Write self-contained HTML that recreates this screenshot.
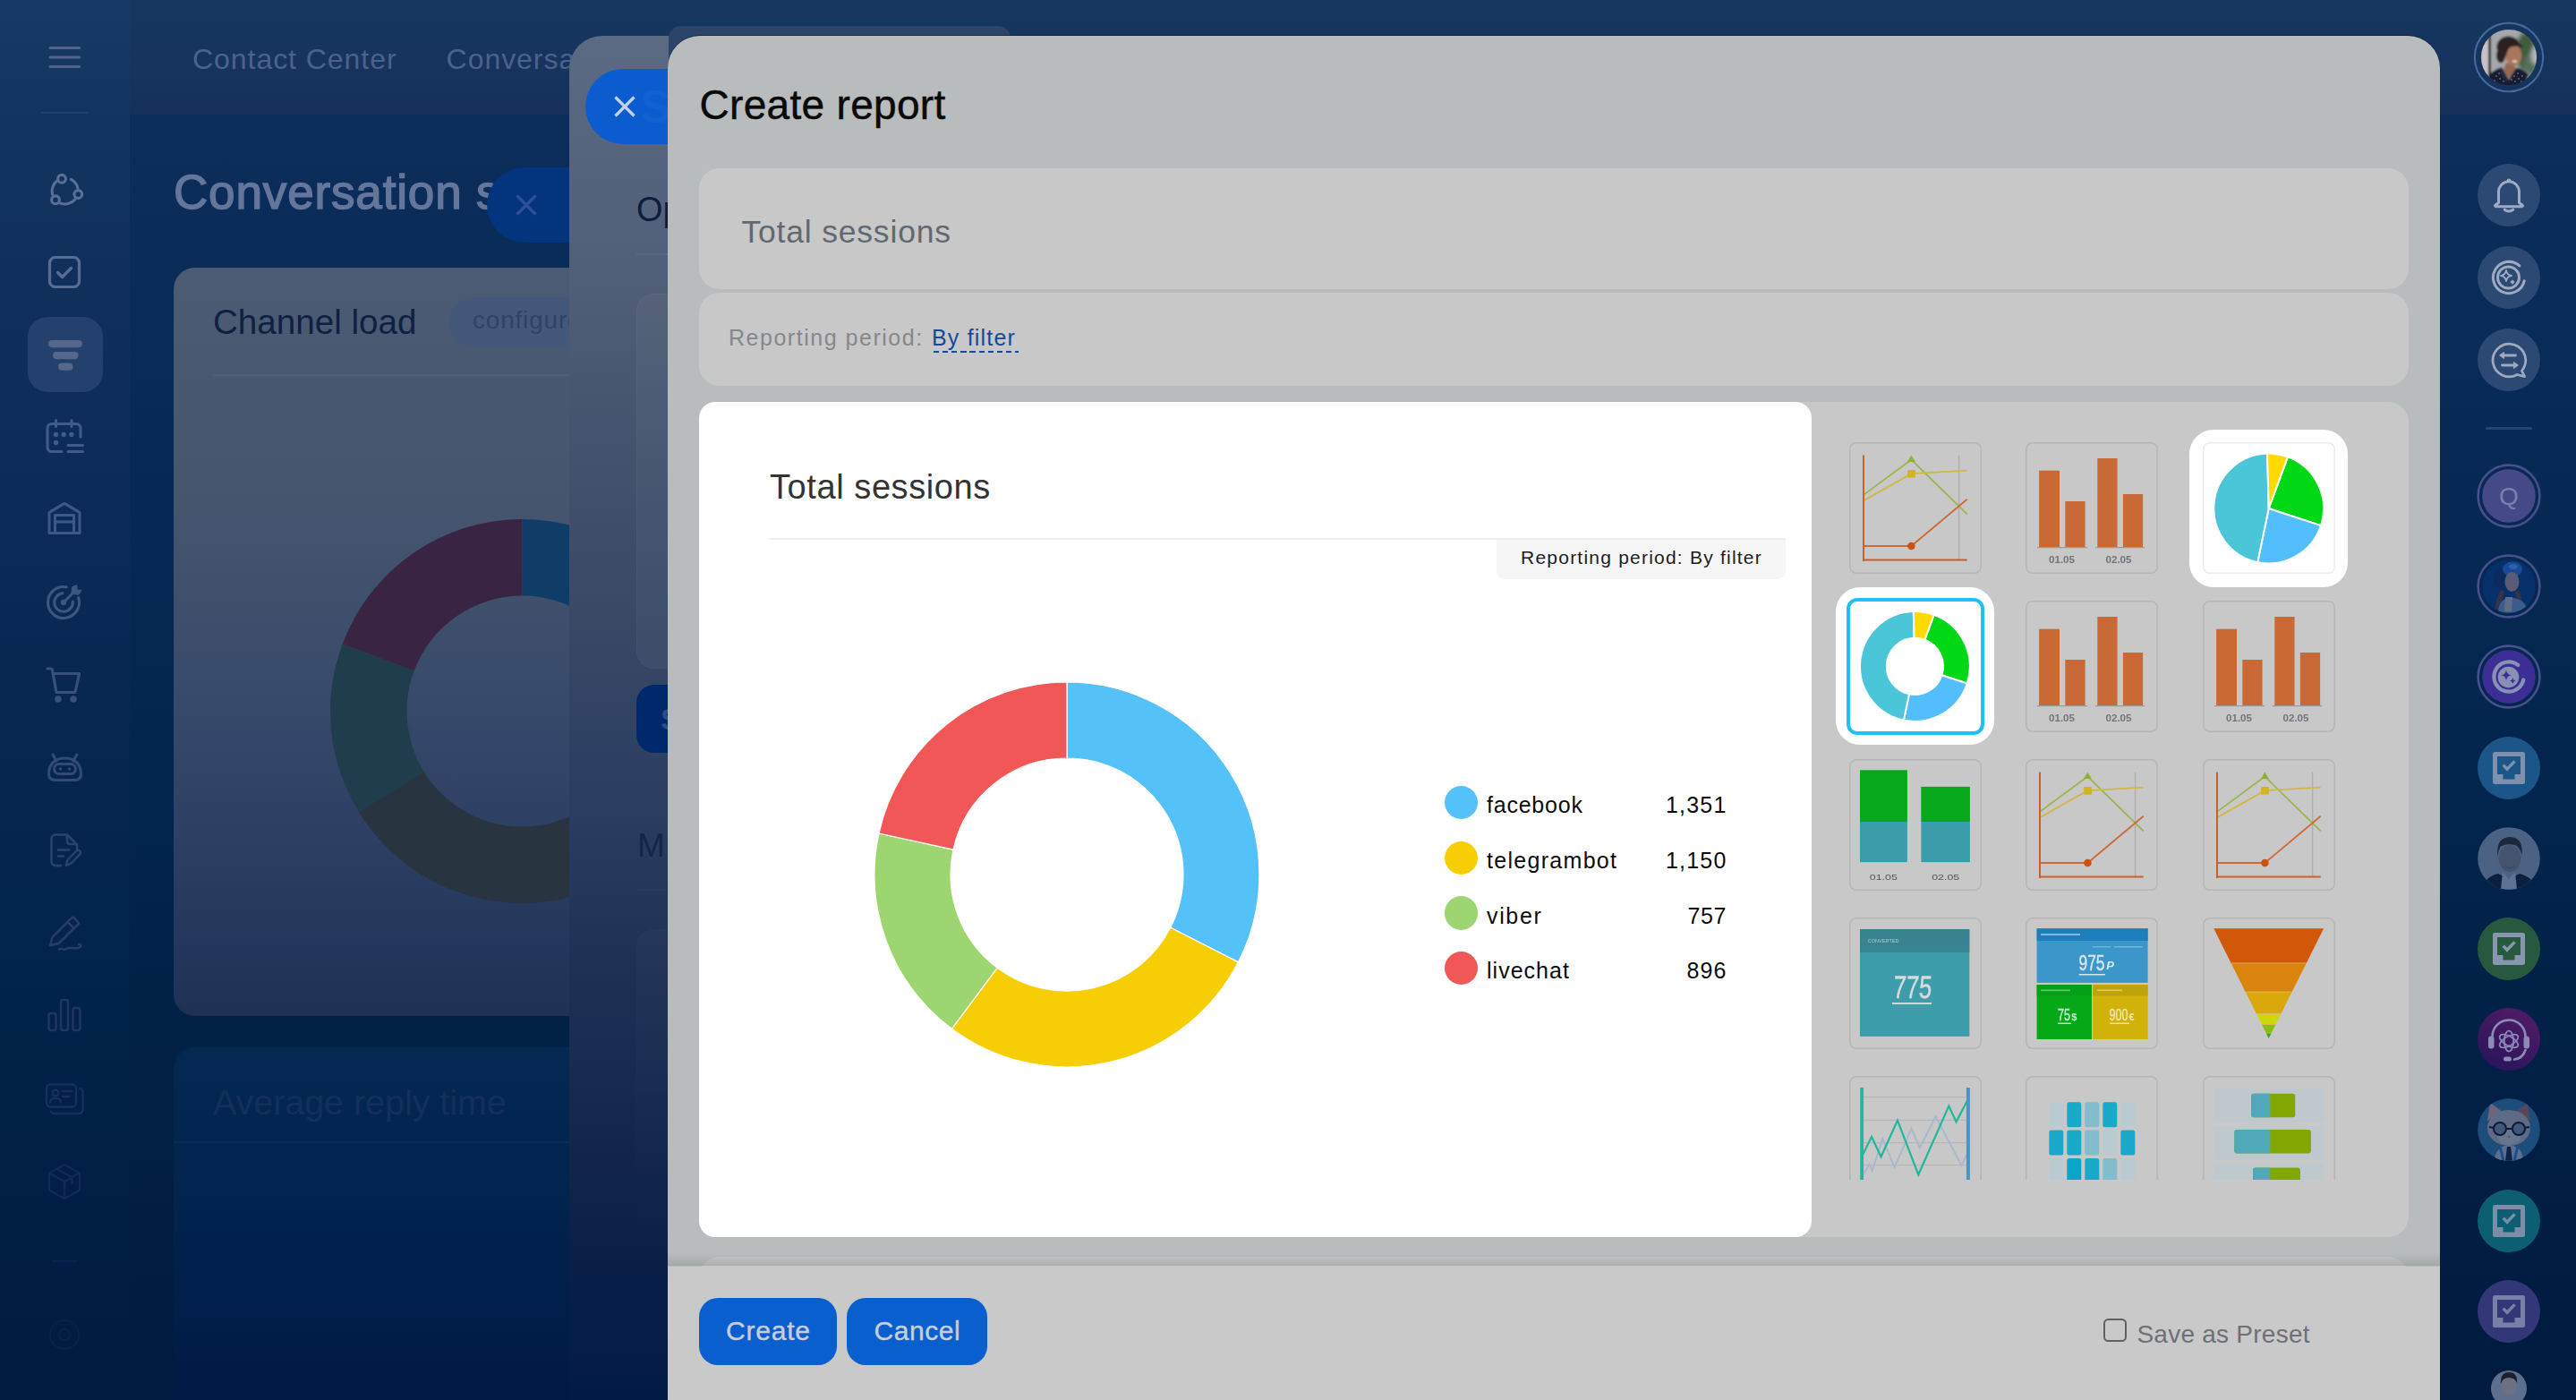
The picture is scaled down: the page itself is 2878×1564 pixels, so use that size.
<!DOCTYPE html>
<html>
<head>
<meta charset="utf-8">
<title>Create report</title>
<style>
*{box-sizing:border-box;margin:0;padding:0}
html,body{width:2878px;height:1564px;overflow:hidden}
body{font-family:"Liberation Sans",sans-serif;position:relative;background:linear-gradient(180deg,#0e2e5b 0px,#0d2d5a 128px,#082b57 400px,#062852 600px,#03244c 900px,#022147 1130px,#011d43 1350px,#001b40 1564px)}
.abs{position:absolute}
#leftbar{left:0;top:0;width:145px;height:1564px;background:linear-gradient(180deg,#173a66 0px,#13345e 130px,#0f2f5a 360px,#0b2a55 600px,#062650 850px,#022349 1130px,#011e44 1350px,#001b40 1564px)}
#topbar{left:145px;top:0;width:2733px;height:128px;background:linear-gradient(180deg,#17375f 0px,#15315b 128px)}
#topstrip{left:0;top:0;width:2878px;height:40px;background:linear-gradient(180deg,#14305b,#12305c)}
.navtxt{color:#4c628a;font-size:32px;top:46.21px;line-height:40px;white-space:nowrap;letter-spacing:0.95px}
#title{left:194px;top:184.84px;font-size:53px;line-height:60px;color:#64769a;white-space:nowrap;letter-spacing:0.85px;-webkit-text-stroke:1.5px #64769a}
/* bg cards */
#card1{left:194px;top:299px;width:600px;height:836px;border-radius:24px;background:linear-gradient(180deg,#4c5b74 0px,#46566f 250px,#3a4c6b 450px,#2e4164 620px,#22375b 760px,#1f3254 836px)}
#card2{left:194px;top:1170px;width:600px;height:420px;border-radius:24px;background:linear-gradient(180deg,#042852 0px,#02244f 150px,#001e49 300px,#001a44 394px)}
/* middle panel */
#mid{left:636px;top:40px;width:200px;height:1524px;border-top-left-radius:37px;background:linear-gradient(180deg,#5b6a83 0px,#515f78 260px,#44536d 460px,#384966 660px,#2b3d60 860px,#1d3054 1060px,#11254c 1260px,#061d47 1420px,#021b46 1524px)}
/* main panel */
#main{left:746px;top:40px;width:1980px;height:1524px;border-radius:36px 36px 0 0;background:#b9bcbd;box-shadow:0 -1px 0 rgba(4,20,50,0.5)}
#rightbar{left:2726px;top:0;width:152px;height:1564px}

.box{background:#c8c8c9;border-radius:23px}
#crtitle{left:781.6px;top:87.16px;font-size:46px;line-height:60px;letter-spacing:0.3px;color:#0a0a0a;white-space:nowrap;-webkit-text-stroke:0.5px #0a0a0a}
#inp{left:828.4px;top:233.7px;font-size:35.5px;line-height:50px;letter-spacing:0.82px;color:#62686f;white-space:nowrap}
#rp{left:814px;top:357.24px;font-size:25px;line-height:40px;letter-spacing:1.52px;color:#85878c;white-space:nowrap}
#bf{left:1041px;top:357.24px;font-size:25px;line-height:40px;letter-spacing:1.2px;color:#16489c;white-space:nowrap}
#wcard{left:781px;top:449px;width:1243px;height:933px;border-radius:18px;background:#fff}
#wtitle{left:860px;top:515.73px;font-size:38px;line-height:56px;letter-spacing:0.58px;color:#333;white-space:nowrap}
#rtag{left:1672px;top:602.52px;width:323px;height:44.3px;background:#f6f6f7;border-radius:0 0 9px 9px;font-size:21px;line-height:40px;letter-spacing:1.22px;color:#1d1d1d;text-align:center;padding-left:1px;white-space:nowrap}
.dot{left:1614px;width:37.3px;height:37.3px;border-radius:50%}
.lg{left:1661px;font-size:25px;line-height:34px;color:#0c0c0c;white-space:nowrap}
.lv{left:1800px;width:128.3px;text-align:right;font-size:25px;line-height:34px;color:#0c0c0c;white-space:nowrap}
#footshadow{left:746px;top:1400px;width:1980px;height:14px;background:linear-gradient(180deg,rgba(150,152,155,0) 0%,rgba(150,152,155,0.55) 100%)}
#footer{left:746px;top:1414.6px;width:1980px;height:150px;background:#c9c9c9}
.btn{top:1450px;height:74.5px;border-radius:21px;background:#0a5fcf;color:#c8ced9;font-size:30px;line-height:74px;text-align:center;white-space:nowrap;-webkit-text-stroke:0.4px #c8ced9}
#chk{left:2350px;top:1473px;width:26px;height:26px;border:2.4px solid #5d6066;border-radius:5.5px}
#sap{left:2387.4px;top:1471.2px;font-size:28px;line-height:40px;letter-spacing:0.25px;color:#6d7177;white-space:nowrap}
.thg{filter:blur(0.6px)}

#cl{left:238px;top:332px;font-size:38.600px;line-height:56px;color:#0f2042;white-space:nowrap}
#cfg{left:502px;top:332px;width:200px;height:56px;border-radius:28px;background:#44587a;color:#2f4468;font-size:28px;line-height:52px;padding-left:26px;letter-spacing:0.800px;white-space:nowrap}
#art{left:238px;top:1203px;font-size:39.400px;line-height:56px;color:#132f5a;white-space:nowrap}
#pill2{left:544px;top:187px;width:200px;height:84px;border-radius:42px;background:#03357f}
#pill1{left:653.500px;top:77px;width:200px;height:84px;border-radius:42px;background:#0b5ccf;overflow:hidden}
#op{left:711px;top:206px;font-size:38px;line-height:56px;color:#0e1d3d;white-space:nowrap}
#mm{left:712px;top:917px;font-size:37px;line-height:56px;color:#13264a;white-space:nowrap}
#tab{left:747px;top:29px;width:382px;height:40px;border-radius:14px 14px 0 0;background:#2c4468}
</style>
</head>
<body>
<div id="leftbar" class="abs"></div>
<div id="topbar" class="abs"></div>
<!--LEFT_START--><svg class="abs" style="left:44.0px;top:35.5px" width="56" height="56" viewBox="-28.0 -28.0 56 56" fill="none" stroke="#50648a" stroke-width="3.2" stroke-linecap="round" stroke-linejoin="round"><path d="M-16 -10.5 H16.5 M-16 0 H16.5 M-16 10.5 H16.5"/></svg>
<div class="abs" style="left:46px;top:125px;width:53px;height:2px;background:#223f6d"></div>
<svg class="abs" style="left:44.0px;top:185.0px" width="56" height="56" viewBox="-28.0 -28.0 56 56" fill="none" stroke="#5a6f94" stroke-width="3.1" stroke-linecap="round" stroke-linejoin="round"><circle cx="-3" cy="-13.2" r="4.4"/><circle cx="15.3" cy="4" r="4.4"/><circle cx="-10" cy="10.3" r="4.4"/><path d="M7.33 -12.61 A14.6 14.6 0 0 1 14.87 -3.13"/><path d="M11.88 9.78 A14.6 14.6 0 0 1 -5.00 13.84"/><path d="M-13.40 4.18 A14.6 14.6 0 0 1 -7.67 -11.56"/></svg>
<svg class="abs" style="left:44.0px;top:275.5px" width="56" height="56" viewBox="-28.0 -28.0 56 56" fill="none" stroke="#596d92" stroke-width="3.2" stroke-linecap="round" stroke-linejoin="round"><rect x="-16.5" y="-16.5" width="33" height="33" rx="6"/><path d="M-7.5 0.5 L-2.5 5.5 L7.5 -4.5"/></svg>
<div class="abs" style="left:31px;top:354px;width:84px;height:84px;border-radius:22px;background:#24406c"></div>
<svg class="abs" style="left:44.0px;top:369.0px" width="56" height="56" viewBox="-28.0 -28.0 56 56" fill="none" stroke="#55678b" stroke-width="3" stroke-linecap="round" stroke-linejoin="round"><g stroke="none" fill="#55678b"><rect x="-18" y="-17" width="38" height="8.2" rx="4.1"/><rect x="-13" y="-4" width="28.5" height="8.2" rx="4.1"/><rect x="-7" y="8.6" width="16.5" height="8.2" rx="4.1"/></g></svg>
<svg class="abs" style="left:44.0px;top:459.0px" width="56" height="56" viewBox="-28.0 -28.0 56 56" fill="none" stroke="#415a86" stroke-width="3.1" stroke-linecap="round" stroke-linejoin="round"><path d="M-3 17.5 H-14 a5 5 0 0 1 -5 -5 V-8.5 a5 5 0 0 1 5 -5 H13 a5 5 0 0 1 5 5 V1"/><path d="M-9.5 -17.5 V-10.5 M8 -17.5 V-10.5"/><path d="M4 10.5 H20.5 M4 17.5 H20.5"/><g stroke="none" fill="#415a86"><circle cx="-9.5" cy="-1.5" r="2.7"/><circle cx="-0.8" cy="-1.5" r="2.7"/><circle cx="7.8" cy="-1.5" r="2.7"/><circle cx="-9.5" cy="7.5" r="2.7"/></g></svg>
<svg class="abs" style="left:44.0px;top:551.0px" width="56" height="56" viewBox="-28.0 -28.0 56 56" fill="none" stroke="#3e5783" stroke-width="3.1" stroke-linecap="round" stroke-linejoin="round"><path d="M-17 16.5 V-5.5 a2 2 0 0 1 1 -1.7 L-1 -16.2 a2 2 0 0 1 2 0 L16 -7.2 a2 2 0 0 1 1 1.7 V16.5 Z"/><path d="M-10.5 16.5 V-3.5 H10.5 V16.5 M-10.5 4 H10.5"/></svg>
<svg class="abs" style="left:44.0px;top:644.0px" width="56" height="56" viewBox="-28.0 -28.0 56 56" fill="none" stroke="#3d5581" stroke-width="3.1" stroke-linecap="round" stroke-linejoin="round"><path d="M15.64 -4.41 A17.5 17.5 0 1 1 2.04 -16.23"/><path d="M9.26 0.10 A10.3 10.3 0 1 1 -1.90 -9.26"/><circle cx="-1" cy="1" r="3.2" fill="#3d5581" stroke="none"/><path d="M-1 1 L10 -10"/><path d="M9 -16 L8 -9 L15.5 -8 L19 -12.5 L14 -13 L13.5 -18 Z" fill="#3d5581" stroke-width="1.5"/></svg>
<svg class="abs" style="left:44.0px;top:735.0px" width="56" height="56" viewBox="-28.0 -28.0 56 56" fill="none" stroke="#38507e" stroke-width="3.1" stroke-linecap="round" stroke-linejoin="round"><path d="M-19 -16 H-15.5 a2 2 0 0 1 2 1.6 L-9 10.5 H12 L16.5 -10.5 H-12.5"/><g stroke="none" fill="#38507e"><circle cx="-7" cy="18" r="3.8"/><circle cx="10" cy="18" r="3.8"/></g></svg>
<svg class="abs" style="left:44.0px;top:829.0px" width="56" height="56" viewBox="-28.0 -28.0 56 56" fill="none" stroke="#334a78" stroke-width="3.1" stroke-linecap="round" stroke-linejoin="round"><path d="M-13 -14 L-9 -7 M14 -14 L10 -7"/><path d="M-17.5 8 C-17.5 -4 -10 -10 0.5 -10 C11 -10 18.5 -4 18.5 8 C18.5 13 15 14.5 11 14.5 H-10 C-14 14.5 -17.5 13 -17.5 8 Z"/><rect x="-11.5" y="-3.5" width="24" height="11" rx="5.5"/><g stroke="none" fill="#334a78"><circle cx="-4.5" cy="2" r="1.7"/><circle cx="5.5" cy="2" r="1.7"/></g></svg>
<svg class="abs" style="left:44.0px;top:921.5px" width="56" height="56" viewBox="-28.0 -28.0 56 56" fill="none" stroke="#2b4270" stroke-width="2.6" stroke-linecap="round" stroke-linejoin="round"><path d="M-4 17 H-10 a4.5 4.5 0 0 1 -4.5 -4.5 V-13 a4.5 4.5 0 0 1 4.5 -4.5 H3 L14 -6.5 V-2"/><path d="M3 -17 V-10 a3 3 0 0 0 3 3 H13.5"/><path d="M-7 -0.5 H5 M-7 6.5 H-1"/><path d="M2 17 L3.5 10.5 L13.5 0.5 a2.7 2.7 0 0 1 3.8 3.8 L7.5 14.5 Z" fill="none" stroke-width="2.4"/></svg>
<svg class="abs" style="left:44.0px;top:1015.0px" width="56" height="56" viewBox="-28.0 -28.0 56 56" fill="none" stroke="#273c6a" stroke-width="2.5" stroke-linecap="round" stroke-linejoin="round"><path d="M-16 13 L-13.5 4 L8 -17.5 a2 2 0 0 1 2.8 0 L15 -13 a2 2 0 0 1 0 2.8 L-6.5 11 Z"/><path d="M3.5 -13 L10.5 -6"/><path d="M-16 13 L-7 11"/><path d="M-6 17.5 C-2 15 -2 19.5 2 17 C7 14 12 18 17 15.5 C19.5 14 18 11 16 12"/></svg>
<svg class="abs" style="left:44.0px;top:1105.5px" width="56" height="56" viewBox="-28.0 -28.0 56 56" fill="none" stroke="#1f3563" stroke-width="2.5" stroke-linecap="round" stroke-linejoin="round"><rect x="-17.5" y="-2" width="8" height="19" rx="2.5"/><rect x="-4" y="-17" width="8" height="34" rx="2.5"/><rect x="9.5" y="-8" width="8" height="25" rx="2.5"/></svg>
<svg class="abs" style="left:44.0px;top:1199.0px" width="56" height="56" viewBox="-28.0 -28.0 56 56" fill="none" stroke="#192e5c" stroke-width="2.3" stroke-linecap="round" stroke-linejoin="round"><rect x="-20" y="-15.5" width="33" height="25" rx="4.5"/><path d="M-15 14.5 a4.500 4.500 0 0 0 4 2.500 H16 a4.500 4.500 0 0 0 4.500 -4.500 V-7 a4.500 4.500 0 0 0 -3 -4"/><circle cx="-10" cy="-6" r="3.3"/><path d="M-16 4.500 a6 5 0 0 1 12 0"/><path d="M-2 -8 H8 M-2 -2 H5"/></svg>
<svg class="abs" style="left:44.0px;top:1292.0px" width="56" height="56" viewBox="-28.0 -28.0 56 56" fill="none" stroke="#142956" stroke-width="2.3" stroke-linecap="round" stroke-linejoin="round"><path d="M0 -19 L17 -9.5 V9.500 L0 19 L-17 9.500 V-9.500 Z"/><path d="M-17 -9.500 L0 0 L17 -9.500 M0 0 V19"/><path d="M-8.500 -14.200 L8.500 -4.700 V2"/></svg>
<svg class="abs" style="left:44.0px;top:1377.0px" width="56" height="56" viewBox="-28.0 -28.0 56 56" fill="none" stroke="#0b2350" stroke-width="2" stroke-linecap="round" stroke-linejoin="round"><path d="M-14 4 H14"/></svg>
<svg class="abs" style="left:44.0px;top:1463.0px" width="56" height="56" viewBox="-28.0 -28.0 56 56" fill="none" stroke="#08204d" stroke-width="2" stroke-linecap="round" stroke-linejoin="round"><circle r="16"/><circle r="6"/></svg><!--LEFT_END-->
<div class="abs navtxt" style="left:215px">Contact Center</div>
<div class="abs navtxt" style="left:498.6px">Conversation statistics</div>
<div id="title" class="abs">Conversation statistics</div>
<div id="card1" class="abs"></div>
<div id="card2" class="abs"></div>
<!--BG_START-->
<div class="abs" id="cl">Channel load</div>
<div class="abs" id="cfg">configure</div>
<div class="abs" style="left:238px;top:418px;width:420px;height:2px;background:#4f5d77"></div>
<svg class="abs" style="left:0;top:0" width="700" height="1100" viewBox="0 0 700 1100"><defs><linearGradient id="gb" x1="0" y1="0" x2="0" y2="1"><stop offset="0" stop-color="#0f3d68"/><stop offset="1" stop-color="#0f3d68"/></linearGradient></defs><path d="M583.5,580.0 A214.5,214.5 0 0 1 747.8,932.4 L682.3,877.4 A129,129 0 0 0 583.5,665.5 Z" fill="url(#gb)"/><path d="M747.8,932.4 A214.5,214.5 0 0 1 401.0,907.2 L473.7,862.3 A129,129 0 0 0 682.3,877.4 Z" fill="#28343f"/><path d="M401.0,907.2 A214.5,214.5 0 0 1 382.6,719.4 L462.7,749.3 A129,129 0 0 0 473.7,862.3 Z" fill="#1f3d4c"/><path d="M382.6,719.4 A214.5,214.5 0 0 1 583.5,580.0 L583.5,665.5 A129,129 0 0 0 462.7,749.3 Z" fill="#3a2444"/></svg>
<div class="abs" id="art">Average reply time</div>
<div class="abs" style="left:194px;top:1275px;width:460px;height:2px;background:#0a2c57"></div>
<div class="abs" id="pill2"><svg width="30" height="30" viewBox="-15 -15 30 30" style="position:absolute;left:29px;top:27px"><path d="M-10.500 -10.500 L10.500 10.500 M10.500 -10.500 L-10.500 10.500" stroke="#2d5097" stroke-width="3.200" fill="none"/></svg></div>
<!--BG_END-->
<div id="mid" class="abs"></div>
<!--MID_START-->
<div class="abs" id="op">Op</div>
<div class="abs" style="left:711px;top:283px;width:40px;height:2px;background:#5a6883"></div>
<div class="abs" style="left:711px;top:328px;width:60px;height:419px;border-radius:20px;background:rgba(255,255,255,0.035);border:1px solid rgba(255,255,255,0.03)"></div>
<div class="abs" style="left:711px;top:765px;width:60px;height:76px;border-radius:20px;background:#00286c;color:#2f4b8c;font-size:34px;line-height:76px;padding-left:27px;font-weight:bold">S</div>
<div class="abs" id="mm">M</div>
<div class="abs" style="left:711px;top:993px;width:40px;height:2px;background:#283b5f"></div>
<div class="abs" style="left:711px;top:1038px;width:60px;height:400px;border-radius:20px;background:linear-gradient(180deg,rgba(255,255,255,0.018),rgba(255,255,255,0))"></div>
<div class="abs" id="tab"></div>
<div class="abs" id="pill1"><svg width="30" height="30" viewBox="-15 -15 30 30" style="position:absolute;left:29px;top:27px"><path d="M-10.500 -10.500 L10.500 10.500 M10.500 -10.500 L-10.500 10.500" stroke="#c4d0e7" stroke-width="3.200" fill="none"/></svg><span style="position:absolute;left:62px;top:12px;font-size:52px;color:#1361cf;font-weight:bold">S</span></div>
<!--MID_END-->
<div id="main" class="abs"></div>

<div class="abs" id="crtitle">Create report</div>
<div class="abs box" style="left:781px;top:188px;width:1910px;height:135px"></div>
<div class="abs" id="inp">Total sessions</div>
<div class="abs box" style="left:781px;top:327px;width:1910px;height:104px"></div>
<div class="abs" id="rp">Reporting period:</div>
<div class="abs" id="bf">By filter</div><div class="abs" style="left:1042.5px;top:392px;width:95.5px;height:2.2px;background:repeating-linear-gradient(90deg,#16489c 0,#16489c 6.2px,transparent 6.2px,transparent 10.1px)"></div>
<div class="abs box" style="left:781px;top:449px;width:1910px;height:933px"></div>
<div class="abs box" style="left:781px;top:1404px;width:1910px;height:60px"></div>
<div class="abs" id="wcard"></div>
<div class="abs" id="wtitle">Total sessions</div>
<div class="abs" style="left:859px;top:601px;width:1136px;height:2px;background:#eeeeee"></div>
<div class="abs" id="rtag">Reporting period: By filter</div>
<svg class="abs" style="left:0;top:0" width="2878" height="1564" viewBox="0 0 2878 1564"><path d="M1192.00,762.00 A215,215 0 0 1 1383.43,1074.88 L1307.75,1036.19 A130,130 0 0 0 1192.00,847.00 Z" fill="#54c1f9" stroke="#fff" stroke-width="1.2" stroke-linejoin="round"/><path d="M1383.43,1074.88 A215,215 0 0 1 1063.37,1149.28 L1114.23,1081.17 A130,130 0 0 0 1307.75,1036.19 Z" fill="#f6ce03" stroke="#fff" stroke-width="1.2" stroke-linejoin="round"/><path d="M1063.37,1149.28 A215,215 0 0 1 981.97,931.02 L1065.01,949.20 A130,130 0 0 0 1114.23,1081.17 Z" fill="#9dd671" stroke="#fff" stroke-width="1.2" stroke-linejoin="round"/><path d="M981.97,931.02 A215,215 0 0 1 1192.00,762.00 L1192.00,847.00 A130,130 0 0 0 1065.01,949.20 Z" fill="#f25758" stroke="#fff" stroke-width="1.2" stroke-linejoin="round"/></svg>
<div class="abs dot" style="top:877.95px;background:#54c1f9"></div>
<div class="abs lg" style="top:882.24px;letter-spacing:0.78px">facebook</div>
<div class="abs lv" style="top:882.24px;letter-spacing:1.2px;margin-left:1.2px">1,351</div>
<div class="abs dot" style="top:939.75px;background:#f6ce03"></div>
<div class="abs lg" style="top:943.94px;letter-spacing:1.3px">telegrambot</div>
<div class="abs lv" style="top:943.94px;letter-spacing:1.2px;margin-left:1.2px">1,150</div>
<div class="abs dot" style="top:1001.35px;background:#9dd671"></div>
<div class="abs lg" style="top:1005.64px;letter-spacing:1.65px">viber</div>
<div class="abs lv" style="top:1005.64px;letter-spacing:0.6px;margin-left:0.6px">757</div>
<div class="abs dot" style="top:1062.95px;background:#f25758"></div>
<div class="abs lg" style="top:1067.34px;letter-spacing:1.02px">livechat</div>
<div class="abs lv" style="top:1067.34px;letter-spacing:1.1px;margin-left:1.1px">896</div>
<!--THUMBS_START--><div class="abs" style="left:2446px;top:480px;width:177px;height:176px;border-radius:27px;background:#fff"></div>
<div class="abs" style="left:2051px;top:656px;width:177px;height:176px;border-radius:27px;background:#fff"></div>
<div class="abs" style="left:2063px;top:668px;width:154px;height:153px;border-radius:12px;border:4.5px solid #1fc0f5"></div>
<svg class="abs th" style="left:2065.5px;top:494px" width="148" height="147" viewBox="0 0 148 147"><rect x="0.8" y="0.8" width="146.4" height="145.4" rx="7" fill="none" stroke="rgba(0,0,0,0.085)" stroke-width="1.6"/><g class="thg"><line x1="122.6" y1="14.6" x2="122.6" y2="131" stroke="#aeaeb0" stroke-width="1.4"/><polyline points="16,58.9 69.4,19.5 131.7,80.3" fill="none" stroke="#9db64a" stroke-width="1.8"/><polyline points="16,65.4 69.4,35.1 131.7,31.7" fill="none" stroke="#d2b840" stroke-width="1.8"/><polyline points="16,116 69.4,116 131.7,63.7" fill="none" stroke="#cf6a36" stroke-width="1.8"/><polygon points="69.4,14.5 65,22 73.8,22" fill="#8fb030"/><rect x="65.2" y="31" width="8.6" height="8.6" fill="#d4b224"/><circle cx="69.4" cy="116" r="4.3" fill="#cc5210"/><line x1="16" y1="14.6" x2="16" y2="133" stroke="#c9602c" stroke-width="2"/><line x1="15" y1="131.5" x2="131.7" y2="131.5" stroke="#c9602c" stroke-width="2"/></g></svg>
<svg class="abs th" style="left:2262.5px;top:494px" width="148" height="147" viewBox="0 0 148 147"><rect x="0.8" y="0.8" width="146.4" height="145.4" rx="7" fill="none" stroke="rgba(0,0,0,0.085)" stroke-width="1.6"/><g class="thg"><rect x="15.1" y="31.7" width="22.9" height="85.3" fill="#c96a36"/><rect x="44.3" y="66" width="22.3" height="51.0" fill="#c96a36"/><rect x="80.3" y="18" width="22.3" height="99.0" fill="#c96a36"/><rect x="108.9" y="58" width="22.2" height="59.0" fill="#c96a36"/><line x1="13" y1="117.6" x2="69" y2="117.6" stroke="#9a9a9c" stroke-width="1.2"/><line x1="78" y1="117.6" x2="133" y2="117.6" stroke="#9a9a9c" stroke-width="1.2"/><text x="40.5" y="134.5" font-size="11.6" font-weight="bold" text-anchor="middle" fill="#74747c" font-family="Liberation Sans, sans-serif">01.05</text><text x="104" y="134.5" font-size="11.6" font-weight="bold" text-anchor="middle" fill="#74747c" font-family="Liberation Sans, sans-serif">02.05</text></g></svg>
<svg class="abs th" style="left:2460.5px;top:494px" width="148" height="147" viewBox="0 0 148 147"><rect x="0.75" y="0.75" width="146.5" height="145.5" rx="7" fill="none" stroke="#ececec" stroke-width="1.5"/><g class="thg"><path d="M73.7,74 L95.00,16.41 A61.4,61.4 0 0 1 132.06,93.08 Z" fill="#00d815" stroke="#fff" stroke-width="2" stroke-linejoin="round"/><path d="M73.7,74 L132.06,93.08 A61.4,61.4 0 0 1 61.25,134.12 Z" fill="#52bffc" stroke="#fff" stroke-width="2" stroke-linejoin="round"/><path d="M73.7,74 L61.25,134.12 A61.4,61.4 0 0 1 72.09,12.62 Z" fill="#4ac6d8" stroke="#fff" stroke-width="2" stroke-linejoin="round"/><path d="M73.7,74 L72.09,12.62 A61.4,61.4 0 0 1 95.00,16.41 Z" fill="#ffd900" stroke="#fff" stroke-width="2" stroke-linejoin="round"/></g></svg>
<svg class="abs th" style="left:2065.5px;top:671px" width="148" height="147" viewBox="0 0 148 147"><g class="thg"><path d="M94.70,15.81 A61.4,61.4 0 0 1 131.76,92.48 L103.44,83.22 A31.6,31.6 0 0 0 84.36,43.76 Z" fill="#00d815" stroke="#fff" stroke-width="2" stroke-linejoin="round"/><path d="M131.76,92.48 A61.4,61.4 0 0 1 60.95,133.52 L66.99,104.34 A31.6,31.6 0 0 0 103.44,83.22 Z" fill="#52bffc" stroke="#fff" stroke-width="2" stroke-linejoin="round"/><path d="M60.95,133.52 A61.4,61.4 0 0 1 71.79,12.02 L72.57,41.81 A31.6,31.6 0 0 0 66.99,104.34 Z" fill="#4ac6d8" stroke="#fff" stroke-width="2" stroke-linejoin="round"/><path d="M71.79,12.02 A61.4,61.4 0 0 1 94.70,15.81 L84.36,43.76 A31.6,31.6 0 0 0 72.57,41.81 Z" fill="#ffd900" stroke="#fff" stroke-width="2" stroke-linejoin="round"/></g></svg>
<svg class="abs th" style="left:2262.5px;top:671px" width="148" height="147" viewBox="0 0 148 147"><rect x="0.8" y="0.8" width="146.4" height="145.4" rx="7" fill="none" stroke="rgba(0,0,0,0.085)" stroke-width="1.6"/><g class="thg"><rect x="15.1" y="31.7" width="22.9" height="85.3" fill="#c96a36"/><rect x="44.3" y="66" width="22.3" height="51.0" fill="#c96a36"/><rect x="80.3" y="18" width="22.3" height="99.0" fill="#c96a36"/><rect x="108.9" y="58" width="22.2" height="59.0" fill="#c96a36"/><line x1="13" y1="117.6" x2="69" y2="117.6" stroke="#9a9a9c" stroke-width="1.2"/><line x1="78" y1="117.6" x2="133" y2="117.6" stroke="#9a9a9c" stroke-width="1.2"/><text x="40.5" y="134.5" font-size="11.6" font-weight="bold" text-anchor="middle" fill="#74747c" font-family="Liberation Sans, sans-serif">01.05</text><text x="104" y="134.5" font-size="11.6" font-weight="bold" text-anchor="middle" fill="#74747c" font-family="Liberation Sans, sans-serif">02.05</text></g></svg>
<svg class="abs th" style="left:2460.5px;top:671px" width="148" height="147" viewBox="0 0 148 147"><rect x="0.8" y="0.8" width="146.4" height="145.4" rx="7" fill="none" stroke="rgba(0,0,0,0.085)" stroke-width="1.6"/><g class="thg"><rect x="15.1" y="31.7" width="22.9" height="85.3" fill="#c96a36"/><rect x="44.3" y="66" width="22.3" height="51.0" fill="#c96a36"/><rect x="80.3" y="18" width="22.3" height="99.0" fill="#c96a36"/><rect x="108.9" y="58" width="22.2" height="59.0" fill="#c96a36"/><line x1="13" y1="117.6" x2="69" y2="117.6" stroke="#9a9a9c" stroke-width="1.2"/><line x1="78" y1="117.6" x2="133" y2="117.6" stroke="#9a9a9c" stroke-width="1.2"/><text x="40.5" y="134.5" font-size="11.6" font-weight="bold" text-anchor="middle" fill="#74747c" font-family="Liberation Sans, sans-serif">01.05</text><text x="104" y="134.5" font-size="11.6" font-weight="bold" text-anchor="middle" fill="#74747c" font-family="Liberation Sans, sans-serif">02.05</text></g></svg>
<svg class="abs th" style="left:2065.5px;top:848px" width="148" height="147" viewBox="0 0 148 147"><rect x="0.8" y="0.8" width="146.4" height="145.4" rx="7" fill="none" stroke="rgba(0,0,0,0.085)" stroke-width="1.6"/><g class="thg"><rect x="12" y="12.3" width="52.9" height="57.7" fill="#07a91a"/><rect x="12" y="70" width="52.9" height="45.1" fill="#3b9dab"/><rect x="80.3" y="30.9" width="54.6" height="39.1" fill="#07a91a"/><rect x="80.3" y="70" width="54.6" height="45.1" fill="#3b9dab"/><text x="38.3" y="134.6" font-size="9.5" text-anchor="middle" fill="#55555c" textLength="31" lengthAdjust="spacingAndGlyphs" font-family="Liberation Sans, sans-serif">01.05</text><text x="107.7" y="134.6" font-size="9.5" text-anchor="middle" fill="#55555c" textLength="31" lengthAdjust="spacingAndGlyphs" font-family="Liberation Sans, sans-serif">02.05</text></g></svg>
<svg class="abs th" style="left:2262.5px;top:848px" width="148" height="147" viewBox="0 0 148 147"><rect x="0.8" y="0.8" width="146.4" height="145.4" rx="7" fill="none" stroke="rgba(0,0,0,0.085)" stroke-width="1.6"/><g class="thg"><line x1="122.6" y1="14.6" x2="122.6" y2="131" stroke="#aeaeb0" stroke-width="1.4"/><polyline points="16,58.9 69.4,19.5 131.7,80.3" fill="none" stroke="#9db64a" stroke-width="1.8"/><polyline points="16,65.4 69.4,35.1 131.7,31.7" fill="none" stroke="#d2b840" stroke-width="1.8"/><polyline points="16,116 69.4,116 131.7,63.7" fill="none" stroke="#cf6a36" stroke-width="1.8"/><polygon points="69.4,14.5 65,22 73.8,22" fill="#8fb030"/><rect x="65.2" y="31" width="8.6" height="8.6" fill="#d4b224"/><circle cx="69.4" cy="116" r="4.3" fill="#cc5210"/><line x1="16" y1="14.6" x2="16" y2="133" stroke="#c9602c" stroke-width="2"/><line x1="15" y1="131.5" x2="131.7" y2="131.5" stroke="#c9602c" stroke-width="2"/></g></svg>
<svg class="abs th" style="left:2460.5px;top:848px" width="148" height="147" viewBox="0 0 148 147"><rect x="0.8" y="0.8" width="146.4" height="145.4" rx="7" fill="none" stroke="rgba(0,0,0,0.085)" stroke-width="1.6"/><g class="thg"><line x1="122.6" y1="14.6" x2="122.6" y2="131" stroke="#aeaeb0" stroke-width="1.4"/><polyline points="16,58.9 69.4,19.5 131.7,80.3" fill="none" stroke="#9db64a" stroke-width="1.8"/><polyline points="16,65.4 69.4,35.1 131.7,31.7" fill="none" stroke="#d2b840" stroke-width="1.8"/><polyline points="16,116 69.4,116 131.7,63.7" fill="none" stroke="#cf6a36" stroke-width="1.8"/><polygon points="69.4,14.5 65,22 73.8,22" fill="#8fb030"/><rect x="65.2" y="31" width="8.6" height="8.6" fill="#d4b224"/><circle cx="69.4" cy="116" r="4.3" fill="#cc5210"/><line x1="16" y1="14.6" x2="16" y2="133" stroke="#c9602c" stroke-width="2"/><line x1="15" y1="131.5" x2="131.7" y2="131.5" stroke="#c9602c" stroke-width="2"/></g></svg>
<svg class="abs th" style="left:2065.5px;top:1025px" width="148" height="147" viewBox="0 0 148 147"><rect x="0.8" y="0.8" width="146.4" height="145.4" rx="7" fill="none" stroke="rgba(0,0,0,0.085)" stroke-width="1.6"/><g class="thg"><rect x="12" y="13.1" width="122.3" height="119.8" fill="#3d9dab"/><rect x="12" y="13.1" width="122.3" height="25.8" fill="#38838f"/><text x="20.6" y="28" font-size="5.5" fill="#a8cfd4" font-family="Liberation Sans, sans-serif" textLength="35" lengthAdjust="spacingAndGlyphs">CONVERTED</text><text x="70" y="90" font-size="35.5" text-anchor="middle" fill="#d6dbdb" stroke="#d6dbdb" stroke-width="0.5" font-family="Liberation Sans, sans-serif" textLength="43" lengthAdjust="spacingAndGlyphs" transform="skewX(-4) translate(6.3 0)">775</text><rect x="48" y="95" width="44" height="1.9" fill="#d6dbdb"/></g></svg>
<svg class="abs th" style="left:2262.5px;top:1025px" width="148" height="147" viewBox="0 0 148 147"><rect x="0.8" y="0.8" width="146.4" height="145.4" rx="7" fill="none" stroke="rgba(0,0,0,0.085)" stroke-width="1.6"/><g class="thg"><rect x="12.6" y="12.3" width="124" height="60.6" fill="#3b97c9"/><rect x="12.6" y="12.3" width="124" height="13.7" fill="#1e7ebc"/><rect x="17" y="18" width="44" height="2" fill="#9cc6e2" opacity="0.8"/><rect x="75" y="32" width="20" height="1.5" fill="#8fbfdd" opacity="0.6"/><rect x="99" y="32" width="32" height="1.5" fill="#8fbfdd" opacity="0.7"/><text x="74" y="58.7" font-size="24.7" text-anchor="middle" fill="#dbe5ec" stroke="#dbe5ec" stroke-width="0.4" font-family="Liberation Sans, sans-serif" textLength="29" lengthAdjust="spacingAndGlyphs">975</text><text x="94.5" y="57.5" font-size="13" text-anchor="middle" fill="#dbe5ec" font-family="Liberation Sans, sans-serif" font-style="italic" font-weight="bold">P</text><rect x="59.7" y="63" width="29.2" height="1.5" fill="#dbe5ec"/><rect x="12.6" y="75.1" width="61.4" height="60.9" fill="#06a818"/><rect x="12.6" y="75.1" width="61.4" height="12.3" fill="#05a015"/><rect x="75.1" y="75.1" width="61.5" height="60.9" fill="#d1b209"/><rect x="75.1" y="75.1" width="61.5" height="12.3" fill="#c0a30a"/><rect x="17" y="80.5" width="33" height="1.6" fill="#7fd088" opacity="0.8"/><rect x="80" y="80.5" width="28" height="1.6" fill="#e6d375" opacity="0.8"/><text x="43" y="114.8" font-size="18.5" text-anchor="middle" fill="#d6e8d8" stroke="#d6e8d8" stroke-width="0.35" font-family="Liberation Sans, sans-serif" textLength="14" lengthAdjust="spacingAndGlyphs">75</text><text x="54.2" y="114.8" font-size="11" font-weight="bold" text-anchor="middle" fill="#d6e8d8" font-family="Liberation Sans, sans-serif">$</text><rect x="36" y="117.6" width="15" height="1.3" fill="#d6e8d8"/><text x="104" y="114.8" font-size="18.5" text-anchor="middle" fill="#efe6b8" stroke="#efe6b8" stroke-width="0.35" font-family="Liberation Sans, sans-serif" textLength="21" lengthAdjust="spacingAndGlyphs">900</text><text x="118.5" y="114.8" font-size="11" font-weight="bold" text-anchor="middle" fill="#efe6b8" font-family="Liberation Sans, sans-serif">€</text><rect x="94" y="117.6" width="22" height="1.3" fill="#efe6b8"/></g></svg>
<svg class="abs th" style="left:2460.5px;top:1025px" width="148" height="147" viewBox="0 0 148 147"><rect x="0.8" y="0.8" width="146.4" height="145.4" rx="7" fill="none" stroke="rgba(0,0,0,0.085)" stroke-width="1.6"/><g class="thg"><polygon points="12.3,12.3 135.1,12.3 115.8,50.9 31.6,50.9" fill="#d05808"/><polygon points="31.6,50.9 115.8,50.9 99.7,83.1 47.7,83.1" fill="#d9840d"/><polygon points="47.7,83.1 99.7,83.1 87.5,107.4 59.9,107.4" fill="#d9a90b"/><polygon points="59.9,107.4 87.5,107.4 81.5,119.4 65.9,119.4" fill="#cfd60a"/><polygon points="65.9,119.4 81.5,119.4 76.2,130 71.2,130" fill="#8cbf10"/><polygon points="71.2,130 76.2,130 73.7,135.1 73.7,135.1" fill="#2fa34a"/><line x1="31.6" y1="50.9" x2="115.8" y2="50.9" stroke="#e8b070" stroke-width="1" opacity="0.8"/><line x1="47.7" y1="83.1" x2="99.7" y2="83.1" stroke="#e8b070" stroke-width="1" opacity="0.8"/><line x1="59.9" y1="107.4" x2="87.5" y2="107.4" stroke="#e8b070" stroke-width="1" opacity="0.8"/><line x1="65.9" y1="119.4" x2="81.5" y2="119.4" stroke="#e8b070" stroke-width="1" opacity="0.8"/></g></svg>
<svg class="abs th" style="left:2065.5px;top:1202px" width="148" height="116" viewBox="0 0 148 116"><rect x="0.8" y="0.8" width="146.4" height="145.4" rx="7" fill="none" stroke="rgba(0,0,0,0.085)" stroke-width="1.6"/><g class="thg"><line x1="14" y1="23.7" x2="133" y2="23.7" stroke="#b7b7b9" stroke-width="1.2"/><line x1="14" y1="49.3" x2="133" y2="49.3" stroke="#b7b7b9" stroke-width="1.2"/><line x1="14" y1="74.6" x2="133" y2="74.6" stroke="#b7b7b9" stroke-width="1.2"/><line x1="14" y1="99.6" x2="133" y2="99.6" stroke="#b7b7b9" stroke-width="1.2"/><polyline points="15.7,110.3 22.3,98.6 25.6,105.9 37.3,70.3 50.6,101.9 69.6,58.6 78.9,80.3 96.6,45.3 125.6,100.3 132.2,85.3" fill="none" stroke="#a9b9cb" stroke-width="2"/><polyline points="14,90.3 25,68 35.6,90.3 54,49.6 77.3,110.3 111.3,33.6 119.6,51.3 132.2,27" fill="none" stroke="#20b898" stroke-width="2.2"/><rect x="12.3" y="13" width="3.7" height="110" fill="#1fb89a"/><rect x="130.9" y="13" width="4" height="110" fill="#4f93c0"/></g></svg>
<svg class="abs th" style="left:2262.5px;top:1202px" width="148" height="116" viewBox="0 0 148 116"><rect x="0.8" y="0.8" width="146.4" height="145.4" rx="7" fill="none" stroke="rgba(0,0,0,0.085)" stroke-width="1.6"/><g class="thg"><rect x="26.3" y="29.3" width="16" height="28" rx="2.5" fill="#b9cbd1"/><rect x="46.3" y="29.3" width="16" height="28" rx="2.5" fill="#1aa9c9"/><rect x="66.3" y="29.3" width="16" height="28" rx="2.5" fill="#82bccd"/><rect x="86.3" y="29.3" width="16" height="28" rx="2.5" fill="#1aa9c9"/><rect x="106.3" y="29.3" width="16" height="28" rx="2.5" fill="#b9cbd1"/><rect x="26.3" y="60.6" width="16" height="28" rx="2.5" fill="#1aa9c9"/><rect x="46.3" y="60.6" width="16" height="28" rx="2.5" fill="#1aa9c9"/><rect x="66.3" y="60.6" width="16" height="28" rx="2.5" fill="#82bccd"/><rect x="86.3" y="60.6" width="16" height="28" rx="2.5" fill="#b9cbd1"/><rect x="106.3" y="60.6" width="16" height="28" rx="2.5" fill="#1aa9c9"/><rect x="26.3" y="91.9" width="16" height="28" rx="2.5" fill="#b9cbd1"/><rect x="46.3" y="91.9" width="16" height="28" rx="2.5" fill="#0aa5c8"/><rect x="66.3" y="91.9" width="16" height="28" rx="2.5" fill="#1aa9c9"/><rect x="86.3" y="91.9" width="16" height="28" rx="2.5" fill="#82bccd"/><rect x="106.3" y="91.9" width="16" height="28" rx="2.5" fill="#b9cbd1"/></g></svg>
<svg class="abs th" style="left:2460.5px;top:1202px" width="148" height="116" viewBox="0 0 148 116"><rect x="0.8" y="0.8" width="146.4" height="145.4" rx="7" fill="none" stroke="rgba(0,0,0,0.085)" stroke-width="1.6"/><g class="thg"><rect x="12" y="13" width="123.2" height="38.3" fill="#bfc8cd"/><rect x="12" y="56" width="123.2" height="37.6" fill="#bfc8cd"/><rect x="12" y="97.9" width="123.2" height="38" fill="#bfc8cd"/><rect x="54" y="19.7" width="49.3" height="26.6" rx="3" fill="#82a800"/><path d="M57,19.7 H75.3 V46.3 H57 a3,3 0 0 1 -3,-3 V22.7 a3,3 0 0 1 3,-3 Z" fill="#4fa9b9"/><rect x="35.3" y="60" width="85.6" height="26.6" rx="3" fill="#82a800"/><path d="M38.3,60 H75.3 V86.6 H38.3 a3,3 0 0 1 -3,-3 V63 a3,3 0 0 1 3,-3 Z" fill="#4fa9b9"/><rect x="56" y="102.6" width="52.9" height="26.6" rx="3" fill="#82a800"/><path d="M59,102.6 H75.3 V129.2 H59 a3,3 0 0 1 -3,-3 V105.6 a3,3 0 0 1 3,-3 Z" fill="#4fa9b9"/></g></svg><!--THUMBS_END-->
<div class="abs" id="footshadow"></div>
<div class="abs" id="footer"></div>
<div class="abs btn" style="left:781px;width:154px;letter-spacing:0.8px;padding-left:0.8px">Create</div>
<div class="abs btn" style="left:946px;width:157.2px;letter-spacing:0.55px;padding-left:0.55px">Cancel</div>
<div class="abs" id="chk"></div>
<div class="abs" id="sap">Save as Preset</div>
<!--MAINEND-->
<div id="rightbar" class="abs"></div>
<!--RIGHT_START--><svg class="abs" style="left:2763.0px;top:24.0px" width="80" height="80" viewBox="-40.0 -40.0 80 80"><defs><clipPath id="cpu"><circle r="31.1"/></clipPath><filter id="bl1"><feGaussianBlur stdDeviation="0.8"/></filter><filter id="bl2"><feGaussianBlur stdDeviation="2"/></filter></defs>
<circle r="38.200" fill="none" stroke="#466a9f" stroke-width="2"/>
<g clip-path="url(#cpu)"><g filter="url(#bl1)">
<rect x="-32" y="-32" width="64" height="64" fill="#a5a7ac"/>
<rect x="-32" y="-32" width="9.500" height="64" fill="#c6c3c2"/>
<rect x="-23" y="-26" width="3" height="52" fill="#26272d"/>
<g filter="url(#bl2)"><ellipse cx="19" cy="-6" rx="11" ry="22" fill="#3f5c3e"/><ellipse cx="24" cy="8" rx="8" ry="12" fill="#55705a"/><ellipse cx="29" cy="-2" rx="4" ry="10" fill="#b5babd"/></g>
<ellipse cx="-0.600" cy="-11.500" rx="13" ry="12" fill="#2b2022"/>
<ellipse cx="-9" cy="-2" rx="5" ry="8.500" fill="#2b2022"/>
<ellipse cx="5" cy="-3" rx="9.300" ry="12.300" fill="#a8765b" transform="rotate(-8 5 -3)"/>
<path d="M-7 -8 q2 -9 12 -9 q8 0 11 6 q-9 -3 -15 0 q-3 3 -4 10z" fill="#2b2022"/>
<path d="M-3 6 l9 3 l3 8 l-9 6 l-6 -9z" fill="#96674f"/>
<ellipse cx="6.500" cy="4.600" rx="3" ry="1.100" fill="#efe4de"/>
<path d="M-24 24 q3 -9 16 -13 l8 14 l8 -13 q8 0 14 8 l-6 14 h-36z" fill="#171e31"/>
<path d="M-8 11 l8 14 l-3 3 l-8 -12z" fill="#222a40"/>
</g>
<g fill="#c9ccd6" opacity="0.800"><circle cx="-14" cy="21" r="0.700"/><circle cx="-10" cy="24" r="0.700"/><circle cx="-6" cy="27" r="0.700"/><circle cx="-16" cy="26" r="0.700"/><circle cx="6" cy="21" r="0.700"/><circle cx="10" cy="18" r="0.700"/><circle cx="11" cy="24" r="0.700"/><circle cx="15" cy="21" r="0.700"/><circle cx="7" cy="27" r="0.700"/><circle cx="3" cy="25" r="0.700"/><circle cx="14" cy="27" r="0.700"/><circle cx="-11" cy="18" r="0.700"/></g>
</g></svg>
<svg class="abs" style="left:2763.0px;top:178.0px" width="80" height="80" viewBox="-40.0 -40.0 80 80"><circle r="35" fill="#2b4973"/>
<g fill="none" stroke="#9eaac1" stroke-width="3" stroke-linecap="round" stroke-linejoin="round">
<path d="M-11.5 8.5 V-3.5 a11.5 11.7 0 0 1 23 0 V8.5 l3.6 2.7 q0.9 1.3 -0.9 1.5 H-14.2 q-1.8 -0.2 -0.9 -1.5 Z"/>
<path d="M-4.8 16.2 q4.8 3.6 9.6 0"/>
</g><circle cy="-16.2" r="2.3" fill="#9eaac1"/></svg>
<svg class="abs" style="left:2763.0px;top:270.0px" width="80" height="80" viewBox="-40.0 -40.0 80 80"><circle r="35" fill="#2b4973"/>
<g fill="none" stroke="#9eaac1" stroke-width="3" stroke-linecap="round">
<path d="M17.22 3.66 A17.6 17.6 0 1 1 11.78 -13.08"/>
<circle cx="-0.500" cy="0" r="12"/>
</g>
<path d="M-3 -8 q0.8 5.2 6 6 q-5.2 0.8 -6 6 q-0.8 -5.2 -6 -6 q5.2 -0.8 6 -6z" fill="none" stroke="#9eaac1" stroke-width="1.8" stroke-linejoin="round"/>
<path d="M4 2.5 l2.6 2.6 l-2.6 2.6 l-2.6 -2.6z" fill="#9eaac1"/></svg>
<svg class="abs" style="left:2763.0px;top:362.0px" width="80" height="80" viewBox="-40.0 -40.0 80 80"><circle r="35" fill="#2b4973"/>
<g fill="none" stroke="#9eaac1" stroke-width="2.8" stroke-linecap="round" stroke-linejoin="round">
<path d="M14.5 12.5 l3 6.2 l-8.2 -2.2 A18.3 18.3 0 1 1 17.3 7.5 Z"/>
<path d="M-8.5 -5 H7.5"/><path d="M-7.5 6 H8.5"/>
</g>
<path d="M-11 -5 l6 -4.2 v8.4z" fill="#9eaac1"/><path d="M11 6 l-6 -4.2 v8.4z" fill="#9eaac1"/></svg>
<div class="abs" style="left:2777px;top:477px;width:52px;height:3px;border-radius:2px;background:#27436f"></div>
<svg class="abs" style="left:2763.0px;top:514.0px" width="80" height="80" viewBox="-40.0 -40.0 80 80"><circle r="34.4" fill="none" stroke="#46508f" stroke-width="2.600"/><circle r="29.8" fill="#454988"/>
<text x="0" y="10" font-size="28" text-anchor="middle" fill="#7880ad" font-family="Liberation Sans, sans-serif">Q</text></svg>
<svg class="abs" style="left:2763.0px;top:615.0px" width="80" height="80" viewBox="-40.0 -40.0 80 80"><defs><clipPath id="cpw"><circle r="29.8"/></clipPath></defs>
<circle r="34.4" fill="none" stroke="#46508f" stroke-width="2.600"/>
<g clip-path="url(#cpw)"><rect x="-30" y="-30" width="60" height="60" fill="#07306a"/>
<ellipse cx="4" cy="-19" rx="11" ry="8.500" fill="#184b96"/>
<ellipse cx="-10" cy="-8" rx="7" ry="10" fill="#0c2a5c"/>
<ellipse cx="2" cy="-2" rx="8" ry="11" fill="#5a5c76" transform="translate(1.500 -3)"/>
<path d="M-9 4 q-6 10 -6 22 l8 0 q-2 -12 2 -20z" fill="#363348"/>
<path d="M11 4 q5 10 3 22 l-7 0 q2 -12 0 -20z" fill="#363348"/>
<path d="M-12 30 q0 -14 10 -17 l8 0 q14 3 16 17z" fill="#3a5b8c"/>
<path d="M-4 12 l8 0 l-1 16 l-8 0z" fill="#5e6d88"/>
<ellipse cx="5" cy="-22" rx="5" ry="3" fill="#2a62b0"/>
</g></svg>
<svg class="abs" style="left:2763.0px;top:716.0px" width="80" height="80" viewBox="-40.0 -40.0 80 80"><circle r="34.4" fill="none" stroke="#46508f" stroke-width="2.600"/><circle r="29.8" fill="#3c2e95"/>
<path d="M16.24 3.45 A16.6 16.6 0 1 1 10.22 -13.08" fill="none" stroke="#8791b3" stroke-width="4.2" stroke-linecap="round"/>
<circle cx="-0.5" cy="0.5" r="11.8" fill="#8791b3"/>
<path d="M-3 -7.5 q0.8 5 5.8 5.8 q-5 0.8 -5.8 5.8 q-0.8 -5 -5.8 -5.8 q5 -0.8 5.8 -5.8z" fill="#3c2e95"/>
<path d="M4.3 1.2 q0.5 2.9 3.4 3.4 q-2.9 0.5 -3.4 3.4 q-0.5 -2.9 -3.4 -3.4 q2.9 -0.5 3.4 -3.4z" fill="#3c2e95"/></svg>
<svg class="abs" style="left:2763.0px;top:818.0px" width="80" height="80" viewBox="-40.0 -40.0 80 80"><circle r="35" fill="#1c5587"/>
<path fill-rule="evenodd" fill="#7f8fae" d="M-15.5 -18 H15.5 a2.5 2.5 0 0 1 2.5 2.5 V15.5 a2.5 2.5 0 0 1 -2.5 2.5 H-15.5 a2.5 2.5 0 0 1 -2.5 -2.5 V-15.5 a2.5 2.5 0 0 1 2.5 -2.5 Z M-13 -13 V7 H-6.5 V12.5 H6.5 V7 H13 V-13 Z"/>
<path d="M-6.3 -3.3 L-2 1.2 L6.5 -7.6" fill="none" stroke="#7f8fae" stroke-width="3.4"/></svg>
<svg class="abs" style="left:2763.0px;top:919.0px" width="80" height="80" viewBox="-40.0 -40.0 80 80"><defs><clipPath id="cpm"><circle r="34.8"/></clipPath></defs>
<g clip-path="url(#cpm)"><rect x="-35" y="-35" width="70" height="70" fill="#4b6282"/>
<path d="M-30 35 q2 -14 18 -18 l12 6 l12 -6 q16 4 18 18z" fill="#0c1f3f"/>
<path d="M-7 15 l7 8 l7 -8 l2 20 l-18 0z" fill="#5b7394"/>
<ellipse cx="1" cy="0" rx="12.500" ry="15" fill="#44536e"/>
<path d="M-12.5 -3 q-2 -20 13 -21 q16 0 14 20 q-3 -10 -8 -11 q-10 -2 -16 2 q-2 4 -3 10z" fill="#1a2840"/>
<path d="M-5 8 q6 4 12 0 q-6 7 -12 0z" fill="#364560"/>
</g></svg>
<svg class="abs" style="left:2763.0px;top:1020.0px" width="80" height="80" viewBox="-40.0 -40.0 80 80"><circle r="35" fill="#27593f"/>
<path fill-rule="evenodd" fill="#8896af" d="M-15.5 -18 H15.5 a2.5 2.5 0 0 1 2.5 2.5 V15.5 a2.5 2.5 0 0 1 -2.5 2.5 H-15.5 a2.5 2.5 0 0 1 -2.5 -2.5 V-15.5 a2.5 2.5 0 0 1 2.5 -2.5 Z M-13 -13 V7 H-6.5 V12.5 H6.5 V7 H13 V-13 Z"/>
<path d="M-6.3 -3.3 L-2 1.2 L6.5 -7.6" fill="none" stroke="#8896af" stroke-width="3.4"/></svg>
<svg class="abs" style="left:2763.0px;top:1121.0px" width="80" height="80" viewBox="-40.0 -40.0 80 80"><defs><linearGradient id="gph" x1="0.2" y1="1" x2="0.8" y2="0"><stop offset="0" stop-color="#27155a"/><stop offset="1" stop-color="#521c68"/></linearGradient></defs>
<circle r="35" fill="url(#gph)"/>
<g fill="none" stroke="#8e8ab8" stroke-linecap="round">
<path d="M-18.5 -3 a18.5 18.5 0 0 1 37 0" stroke-width="2.6"/>
<path d="M18.5 12 q-3 9.5 -12.5 10.5" stroke-width="2.6"/>
</g>
<rect x="-23" y="-3.5" width="6.5" height="14" rx="3" fill="#8e8ab8"/><rect x="16.5" y="-3.5" width="6.5" height="14" rx="3" fill="#8e8ab8"/>
<rect x="-6" y="19.5" width="9" height="5" rx="2.5" fill="#8e8ab8"/>
<g fill="none" stroke="#8e8ab8" stroke-width="1.7">
<ellipse cx="0" cy="2" rx="5.2" ry="11.5" transform="rotate(0 0 2)"/>
<ellipse cx="0" cy="2" rx="5.2" ry="11.5" transform="rotate(60 0 2)"/>
<ellipse cx="0" cy="2" rx="5.2" ry="11.5" transform="rotate(120 0 2)"/>
</g></svg>
<svg class="abs" style="left:2763.0px;top:1222.0px" width="80" height="80" viewBox="-40.0 -40.0 80 80"><defs><clipPath id="cpc"><circle r="34.8"/></clipPath></defs>
<g clip-path="url(#cpc)"><rect x="-35" y="-35" width="70" height="70" fill="#1d4d7a"/>
<path d="M-24 -10 l3 -20 l14 10z" fill="#6c6480"/><path d="M24 -10 l-3 -20 l-14 10z" fill="#55485c"/>
<ellipse cx="0" cy="-2" rx="24" ry="20" fill="#5d6b86"/>
<ellipse cx="0" cy="8" rx="13" ry="9" fill="#667590"/>
<path d="M-16 35 q0 -16 16 -18 q16 2 16 18z" fill="#5d6f8f"/>
<path d="M-10 18 l4 17 M10 18 l-4 17" stroke="#1f4d86" stroke-width="3"/>
<path d="M-2 19 l4 0 l2 16 l-8 0z" fill="#0d2247"/>
<g fill="#40587a" stroke="#0e1b35" stroke-width="2"><circle cx="-10" cy="-1" r="7"/><circle cx="11" cy="-1" r="7"/></g>
<path d="M-3 -1 h7 M-17 -2 l-5 -1 M18 -2 l5 -1" stroke="#0e1b35" stroke-width="2"/>
<path d="M-2 7 l4 0 l-2 2.5z" fill="#5a5062"/>
</g></svg>
<svg class="abs" style="left:2763.0px;top:1324.0px" width="80" height="80" viewBox="-40.0 -40.0 80 80"><circle r="35" fill="#0c5f73"/>
<path fill-rule="evenodd" fill="#7c8da8" d="M-15.5 -18 H15.5 a2.5 2.5 0 0 1 2.5 2.5 V15.5 a2.5 2.5 0 0 1 -2.5 2.5 H-15.5 a2.5 2.5 0 0 1 -2.5 -2.5 V-15.5 a2.5 2.5 0 0 1 2.5 -2.5 Z M-13 -13 V7 H-6.5 V12.5 H6.5 V7 H13 V-13 Z"/>
<path d="M-6.3 -3.3 L-2 1.2 L6.5 -7.6" fill="none" stroke="#7c8da8" stroke-width="3.4"/></svg>
<svg class="abs" style="left:2763.0px;top:1425.0px" width="80" height="80" viewBox="-40.0 -40.0 80 80"><circle r="35" fill="#323777"/>
<path fill-rule="evenodd" fill="#7780a6" d="M-15.5 -18 H15.5 a2.5 2.5 0 0 1 2.5 2.5 V15.5 a2.5 2.5 0 0 1 -2.5 2.5 H-15.5 a2.5 2.5 0 0 1 -2.5 -2.5 V-15.5 a2.5 2.5 0 0 1 2.5 -2.5 Z M-13 -13 V7 H-6.5 V12.5 H6.5 V7 H13 V-13 Z"/>
<path d="M-6.3 -3.3 L-2 1.2 L6.5 -7.6" fill="none" stroke="#7780a6" stroke-width="3.4"/></svg>
<svg class="abs" style="left:2781.0px;top:1529.0px" width="44" height="44" viewBox="-22.0 -22.0 44 44"><defs><clipPath id="cps"><circle r="20"/></clipPath></defs>
<g clip-path="url(#cps)"><rect x="-20" y="-20" width="40" height="40" fill="#5d6f8c"/>
<ellipse cx="0" cy="-3" rx="8.500" ry="11" fill="#6d6f82"/>
<path d="M-9 -5 q-1 -13 9 -13 q10 0 9 12 q-2 -6 -9 -6 q-7 0 -9 7z" fill="#1a1f30"/>
</g></svg><!--RIGHT_END-->
</body>
</html>
